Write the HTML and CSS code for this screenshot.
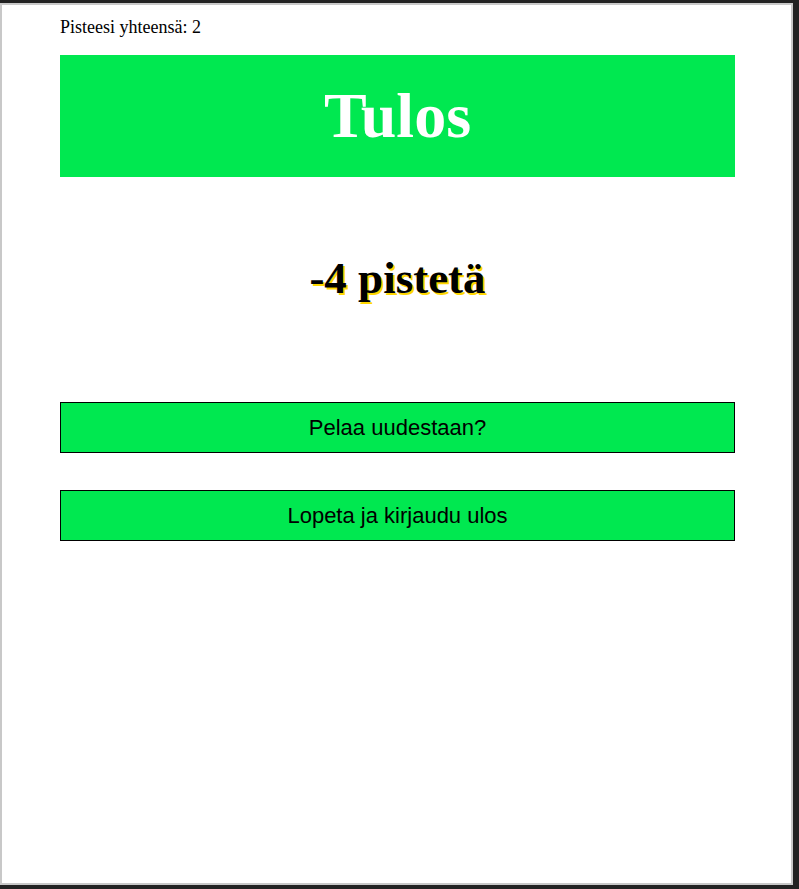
FILE: index.html
```html
<!DOCTYPE html>
<html lang="fi">
<head>
<meta charset="utf-8">
<title>Tulos</title>
<link rel="stylesheet" href="styles.css">
</head>
<body>
<div class="frame">
  <div class="content">
    <p class="total">Pisteesi yhteensä: 2</p>
    <h1 class="title">Tulos</h1>
    <h2 class="result">-4 pistetä</h2>
    <div class="actions">
      <button class="btn" type="button">Pelaa uudestaan?</button>
      <button class="btn" type="button">Lopeta ja kirjaudu ulos</button>
    </div>
  </div>
</div>
</body>
</html>
```
FILE: styles.css
```css
html, body {
  margin: 0;
  padding: 0;
  background: #222222;
}
.frame {
  box-sizing: border-box;
  margin: 3px 6px 0 0;
  height: 882px;
  background: #ffffff;
  border: 2px solid #c8c8c8;
  font-family: "Liberation Serif", "Times New Roman", serif;
  color: #000;
}
.content {
  padding: 12px 56px 0 58px;
}
.total {
  margin: 0;
  font-size: 18px;
  line-height: 21px;
}
.title {
  margin: 17px 0 0;
  padding: 25px 0;
  background: #00e850;
  color: #ffffff;
  font-size: 64px;
  font-weight: bold;
  line-height: 72px;
  text-align: center;
}
.result {
  margin: 76px 0 0;
  font-size: 45px;
  font-weight: bold;
  line-height: 50px;
  text-align: center;
  text-shadow: 2px 2px #ffd700;
}
.actions {
  margin-top: 99px;
  display: flex;
  flex-direction: column;
  gap: 37px;
}
.btn {
  box-sizing: border-box;
  width: 100%;
  height: 51px;
  margin: 0;
  padding: 0;
  background: #00e850;
  border: 1px solid #000;
  border-radius: 0;
  font-family: "Liberation Sans", Arial, sans-serif;
  font-size: 22px;
  color: #000;
  cursor: pointer;
}
```
